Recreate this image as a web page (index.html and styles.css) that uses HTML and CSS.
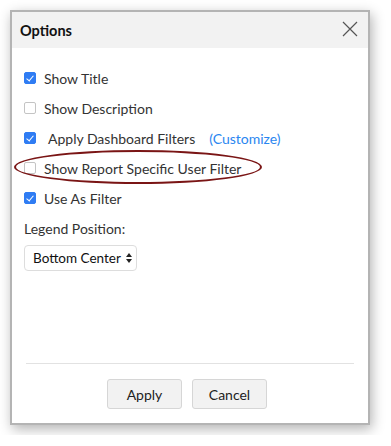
FILE: index.html
```html
<!DOCTYPE html>
<html>
<head>
<meta charset="utf-8">
<title>Options</title>
<link rel="stylesheet" href="styles.css">
</head>
<body>

<div class="dlg">
	<div class="dlg_head">
		<span class="dlg_title">Options</span>
		<span class="dlg_close">
			<svg width="16" height="16" viewBox="0 0 16 16"><path d="M1 1L15 15M15 1L1 15" stroke="#555" stroke-width="1.2" fill="none"/></svg>
		</span>
	</div>
	<div class="dlg_body">
		<label class="opt"><span class="chk on"></span>Show Title</label>
		<label class="opt"><span class="chk"></span>Show Description</label>
		<label class="opt"><span class="chk on"></span><span class="gap">Apply Dashboard Filters</span><a class="link">(Customize)</a></label>
		<label class="opt mark"><span class="chk"></span>Show Report Specific User Filter<span class="ring"></span></label>
		<label class="opt"><span class="chk on"></span>Use As Filter</label>
		<div class="legend">Legend Position:</div>
		<div class="sel">Bottom Center
			<svg width="6" height="10" viewBox="0 0 6 10"><path d="M3 0L6 4H0Z M3 10L0 6H6Z" fill="#222"/></svg>
		</div>
	</div>
	<div class="dlg_foot">
		<span class="btn">Apply</span>
		<span class="btn">Cancel</span>
	</div>
</div>

</body>
</html>
```
FILE: styles.css
```css
*{ margin:0; padding:0; box-sizing:border-box;}
body{
	background:#fff;
	font:14px "Lato","Liberation Sans",sans-serif;
	color:#333;
}
.dlg{
	margin:10px;
	width:360px;
	height:415px;
	border:2px solid #b4b4b4;
	background:#fff;
	box-shadow:2px 4px 12px rgba(0,0,0,.3);
	display:flex;
	flex-direction:column;
}
.dlg_head{
	height:36px;
	background:#f2f2f2;
	display:flex;
	align-items:center;
	justify-content:space-between;
	padding:0 10px 0 8px;
}
.dlg_title{
	font-weight:bold;
	font-size:14.5px;
	color:#111;
}
.dlg_close{ display:flex; margin-top:-3px;}
.dlg_body{
	flex:1;
	padding:15px 12px 0;
}
.opt{
	position:relative;
	display:flex;
	align-items:center;
	height:30px;
	font-size:14px;
	color:#333;
}
.chk{
	width:12px;
	height:12px;
	border:1px solid #c4c4c4;
	border-radius:2px;
	margin-right:8px;
	position:relative;
	background:#fff;
}
.chk.on{
	background:#2f7cf3;
	border-color:#2f7cf3;
}
.chk.on:after{
	content:"";
	position:absolute;
	left:3px;
	top:1px;
	width:3px;
	height:6px;
	border:solid #fff;
	border-width:0 1.5px 1.5px 0;
	transform:rotate(40deg);
}
.gap{ margin-left:4px; margin-right:14px;}
.link{ color:#2a86f0;}
.ring{
	position:absolute;
	left:-10px;
	top:-3px;
	width:248px;
	height:34px;
	border:2px solid #7a1515;
	border-radius:50%;
}
.legend{
	margin-top:7px;
	font-size:14px;
	color:#333;
}
.sel{
	margin-top:8px;
	width:113px;
	height:26px;
	border:1px solid #ddd;
	border-radius:4px;
	display:flex;
	align-items:center;
	justify-content:space-between;
	padding:0 4px 0 8px;
	font-size:13.5px;
	color:#111;
}
.dlg_foot{
	margin:0 14px;
	border-top:1px solid #e2e2e2;
	height:60px;
	display:flex;
	justify-content:center;
	align-items:flex-start;
	gap:10px;
	padding:15px 6px 0 0;
}
.btn{
	width:75px;
	height:30px;
	background:#f2f2f2;
	border:1px solid #d6d6d6;
	border-radius:3px;
	display:flex;
	align-items:center;
	justify-content:center;
	font-size:14px;
	color:#222;
}
```
